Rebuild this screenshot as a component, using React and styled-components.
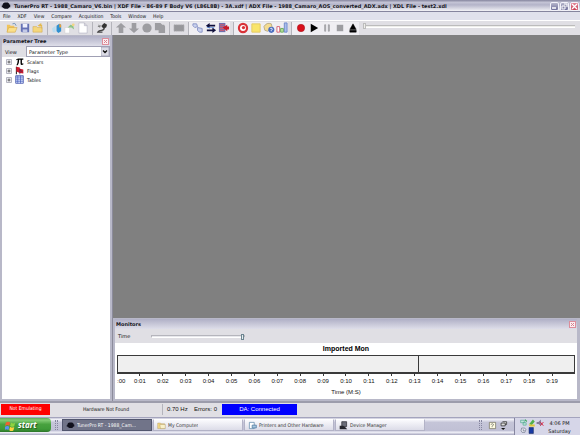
import React, { useState } from "react";
import styled, { createGlobalStyle } from "styled-components";

const title =
  "TunerPro RT - 1988_Camaro_V6.bin | XDF File - 86-89 F Body V6 (L86L8B) - 3A.xdf | ADX File - 1988_Camaro_AOS_converted_ADX.adx | XDL File - test2.xdl";

const menus = ["File", "XDF", "View", "Compare", "Acquisition", "Tools", "Window", "Help"];

const times = Array.from({ length: 19 }, (_, i) => `0:${String(i + 1).padStart(2, "0")}`);

const icons = {
  open: (
    <>
      <path d="M1 3h3l1 1h4v7H1z" fill="#f0c45c" />
      <path d="M3 6h9l-2 5H1z" fill="#fbe08a" stroke="#c99a3c" strokeWidth=".5" />
      <path d="M7 2q3-2 4 2" fill="none" stroke="#6f93b8" />
    </>
  ),
  save: (
    <>
      <path d="M2 2h9v9H3L2 10z" fill="#6672b5" />
      <path d="M4 2h5v4H4z" fill="#eef0fb" />
      <path d="M4 8h5v3H4z" fill="#c3c9e6" />
    </>
  ),
  close: (
    <>
      <path d="M1 5h4l1 1h5v5H1z" fill="#f5d77c" stroke="#c8a04a" strokeWidth=".5" />
      <path d="M6 4l4-3v2h1v4h-1V5H8z" fill="#e3b94e" />
    </>
  ),
  edit: (
    <>
      <path d="M1 7l4-3v7H2z" fill="#b9dcef" />
      <path d="M6 4l3-2 2 1v7l-3 2-2-2z" fill="#2f8fd0" />
      <path d="M9 2l2 1v3H9z" fill="#e9a13a" />
    </>
  ),
  wizard: (
    <>
      <path d="M1 6h5v6H1z" fill="#fff" stroke="#ccc" strokeWidth=".5" />
      <path d="M4 6l3-3 3 1 1 4-3-2z" fill="#8fc487" />
      <circle cx="10" cy="3" r="1.5" fill="#f2d583" />
    </>
  ),
  page: <path d="M2 1h6l3 3v8H2zM8 1v3h3" fill="#fff" stroke="#b5b5c4" strokeWidth=".7" />,
  plug: (
    <>
      <path d="M7 3l2-2 3 2-1 3-3 1-2-2z" fill="#333" />
      <path d="M9 6q0 3-3 3T2 11h5" fill="none" stroke="#444" strokeWidth="1.4" />
      <path d="M2 5l4-1M3 3l1 3" stroke="#777" />
    </>
  ),
  up: <path d="M6.5 1L12 6H9v6H4V6H1z" fill="#9d9da1" />,
  down: <path d="M6.5 12L12 7H9V1H4v6H1z" fill="#9d9da1" />,
  disc: <circle cx="6.5" cy="6.5" r="5" fill="#9d9da1" />,
  copy: <path d="M1 1h6l2 2h2l1 2v7H5V9H1z" fill="#9d9da1" />,
  chip: <path d="M1 3h11v7H1z" fill="#97979b" stroke="#b6b6ba" strokeDasharray="1 1" />,
  link: (
    <>
      <path d="M1 2h4l1 3-3 1-2-2z" fill="#cbd3ef" stroke="#8591c4" />
      <path d="M6 6l5 1v4H8L6 9z" fill="#cbd3ef" stroke="#8591c4" />
    </>
  ),
  swap: (
    <>
      <path d="M1 4l4-3v2h6v2H5v2z" fill="#10103c" />
      <path d="M12 9L8 6v2H2v2h6v2z" fill="#10103c" />
      <path d="M2 6h8" stroke="#5b8fe0" strokeWidth=".8" />
    </>
  ),
  transfer: (
    <>
      <path d="M1 1h7v10H1z" fill="#7070ad" />
      <path d="M2 3h5M2 5h5M2 7h5M2 9h5" stroke="#dc5a6a" />
      <path d="M12 5h-2V3L5 6l5 4V8h2z" fill="#c61b2b" />
    </>
  ),
  gauge: (
    <>
      <circle cx="6.5" cy="6.5" r="4.4" fill="#fff" stroke="#d93238" strokeWidth="2.4" />
      <circle cx="7" cy="6" r="1.8" fill="#d93238" />
    </>
  ),
  note: <path d="M2 2h9v9H2z" fill="#f9e56b" stroke="#e3ca62" />,
  help: (
    <>
      <path d="M1 5q3-5 8-3l1 4-5 4-3-1z" fill="#f4dc92" stroke="#b8a984" />
      <circle cx="9" cy="8.5" r="3.3" fill="#4a6dc0" />
      <path d="M8 7q2-1 2 1L9 9v1" fill="none" stroke="#fff" />
    </>
  ),
  bars: (
    <>
      <path d="M1 5h3v6H1z" fill="#fff" stroke="#d55c6f" />
      <path d="M5 7h3v4H5z" fill="#b9e09b" stroke="#68ab5b" />
      <path d="M9 1h3v10H9z" fill="#a9bdea" stroke="#6d87cb" />
    </>
  ),
  record: <circle cx="6.5" cy="6.5" r="4" fill="#d90f1a" stroke="#9a1018" strokeWidth=".5" />,
  play: <path d="M3 2l8 4.500L3 11z" fill="#000" />,
  pause: <path d="M4 3h1v7H4zM8 3h1v7H8z" fill="#fff" stroke="#9a9a9e" />,
  stop: <path d="M3 3h7v7H3z" fill="#9d9da1" />,
  eject: <path d="M6.5 2L10 8H3zM3 9h7v2H3z" fill="#000" stroke="#000" strokeWidth=".5" />,
  pi: <path d="M1 5q1-3 4-3h7v2h-2v5q0 1 2 0v2q-4 2-4-2V4H6q0 5-2 8H2q2-4 2-8-2 0-3 1z" fill="#000" />,
  flag: (
    <>
      <path d="M2 1v11" stroke="#222" strokeWidth="1.5" />
      <path d="M2 1l5 1v2l5 1v6l-5-1-5-2z" fill="#d11a2d" />
      <path d="M7 4v8M8 6l3 3" stroke="#29295c" />
    </>
  ),
  table: (
    <>
      <path d="M1 1h11v11H1z" fill="#dce6ff" stroke="#2b3d9b" />
      <path d="M1 3h11M1 6h11M1 9h11M4 1v11M8 1v11" stroke="#4159bb" />
    </>
  ),
  logo: <path d="M2 5l1-2 2-1h4l2 2v4l-2 2H5L3 9 2 8H1V6h1zM11 5h1v3h-1z" fill="#10101c" />,
  folder: (
    <>
      <path d="M1 3h4l1 1h5v7H1z" fill="#f4d983" stroke="#a79062" strokeWidth=".6" />
      <path d="M4 5h8v6H5z" fill="#f8f0ca" stroke="#a79062" strokeWidth=".6" />
    </>
  ),
  printer: (
    <>
      <path d="M2 2h7v9H2z" fill="#fff" stroke="#5883a5" />
      <path d="M6 6h6v4H6z" fill="#a7c8df" stroke="#466f9a" />
    </>
  ),
  device: (
    <>
      <path d="M4 1h7v7H4z" fill="#6a6c78" stroke="#26262e" />
      <path d="M1 7h5l3 2 3 3H1z" fill="#26262e" />
    </>
  ),
  windows: (
    <>
      <path d="M1 3q3-2 5 0L5 7Q3 5 0 7z" fill="#ee6131" />
      <path d="M7 3q3 2 5 0l-1 4q-2 2-5 0z" fill="#8fd340" />
      <path d="M0 8q3-2 5 0l-1 4q-2-2-5 0z" fill="#5b91f1" />
      <path d="M6 8q3 2 5 0l-1 4q-2 2-5 0z" fill="#ffd13c" />
    </>
  ),
  keyboard: (
    <>
      <path d="M2 2h9v9H2z" fill="#fffde2" stroke="#6f6d5a" />
      <path d="M4 5q3-2 4 0L6 8v1" fill="none" stroke="#555" />
    </>
  ),
  restore: (
    <>
      <path d="M5 1h6v4H9M3 3h6v4H3z" fill="#ddd" stroke="#222" />
      <path d="M3 10h6l-3 3z" fill="#111" />
    </>
  ),
  network: (
    <>
      <path d="M1 2h6v4H1zM5 6h5v4H5z" fill="#bfe9d9" stroke="#4aa08d" />
      <path d="M8 1l3 3" stroke="#35ab57" strokeWidth="2" />
    </>
  ),
  shield: (
    <>
      <path d="M2 8l6-7 3 3-5 6z" fill="#51b04c" />
      <path d="M1 9h10v3H3z" fill="#e1c737" />
    </>
  ),
  volume: (
    <>
      <path d="M1 5h3l4-4v10L4 8H1z" fill="#847a97" />
      <path d="M7 5l5 6M12 5l-5 6" stroke="#d22645" strokeWidth="1.5" />
    </>
  ),
  clock: <path d="M3 2h6l2 3-2 5H4L2 7zM6 4v3h3" fill="#e9eaf2" stroke="#4f586f" />,
  screen: <path d="M2 1h8v11H2z" fill="#183aa4" stroke="#112354" />,
};

const Icon = ({ name, size = 12 }) => (
  <Drawing width={size} height={size} viewBox="0 0 13 13" aria-hidden="true">
    {icons[name]}
  </Drawing>
);

const toolGroups = [
  { tools: ["open", "save", "close"] },
  { tools: ["edit", "wizard", "page"] },
  { tools: ["plug"] },
  { tools: ["up", "down", "disc", "copy"] },
  { tools: ["chip"] },
  { tools: ["link", "swap", "transfer"], light: true },
  { tools: ["gauge", "note", "help", "bars"], light: true },
  { tools: ["record", "play", "pause", "stop", "eject"], light: true },
];

const tree = [
  { icon: "pi", label: "Scalars" },
  { icon: "flag", label: "Flags" },
  { icon: "table", label: "Tables" },
];

const tasks = [
  { icon: "logo", label: "TunerPro RT - 1988_Cam...", active: true },
  { icon: "folder", label: "My Computer" },
  { icon: "printer", label: "Printers and Other Hardware" },
  { icon: "device", label: "Device Manager" },
];

const CloseButton = ({ label }) => (
  <PanelClose type="button" aria-label={label}>
    <svg width="5" height="5" viewBox="0 0 5 5">
      <path d="M1 1l3 3M4 1L1 4" stroke="#d5838f" />
    </svg>
  </PanelClose>
);

const TitleBar = () => (
  <Title>
    <Icon name="logo" size={10} />
    <TitleText>{title}</TitleText>
    <WindowButton type="button" aria-label="Minimize">
      <svg width="7" height="7" viewBox="0 0 7 7">
        <path d="M1 5h4" stroke="#fff" strokeWidth="1.5" />
      </svg>
    </WindowButton>
    <WindowButton type="button" aria-label="Restore">
      <svg width="7" height="7" viewBox="0 0 7 7">
        <path d="M3 1h3v3M1 3h3v3H1z" fill="none" stroke="#fff" />
      </svg>
    </WindowButton>
    <WindowButton type="button" aria-label="Close" $danger>
      <svg width="7" height="7" viewBox="0 0 7 7">
        <path d="M1 1l5 5M6 1L1 6" stroke="#fff" strokeWidth="1.3" />
      </svg>
    </WindowButton>
  </Title>
);

const ParameterTree = () => {
  const [view, setView] = useState("Parameter Type");
  return (
    <Sidebar>
      <Caption>
        <CaptionText>Parameter Tree</CaptionText>
        <CloseButton label="Close parameter tree" />
      </Caption>
      <ViewRow>
        <ViewLabel htmlFor="view">View</ViewLabel>
        <SelectBox>
          <Select id="view" value={view} onChange={(e) => setView(e.target.value)}>
            <option>Parameter Type</option>
          </Select>
          <Arrow width="8" height="9" viewBox="0 0 8 9">
            <path d="M0 0h8v9H0z" fill="#dcdce6" stroke="#a9a9bb" />
            <path d="M2 3.500l2 2 2-2" fill="none" stroke="#111" strokeWidth="1.3" />
          </Arrow>
        </SelectBox>
      </ViewRow>
      <Tree>
        {tree.map((item) => (
          <TreeItem key={item.label}>
            <Expander type="button" aria-label={`Expand ${item.label}`}>
              <svg width="6" height="6" viewBox="0 0 6 6">
                <path d="M.5 .5h5v5h-5z" fill="#eeeef3" stroke="#b4b4c0" />
                <path d="M1.5 3h3M3 1.500v3" stroke="#444" strokeWidth=".8" />
              </svg>
            </Expander>
            <Icon name={item.icon} size={9} />
            {item.label}
          </TreeItem>
        ))}
      </Tree>
    </Sidebar>
  );
};

const Monitors = () => {
  const [time, setTime] = useState(100);
  return (
    <MonitorPanel>
      <Caption>
        <CaptionText>Monitors</CaptionText>
        <CloseButton label="Close monitors" />
      </Caption>
      <TimeRow>
        <TimeLabel htmlFor="time">Time</TimeLabel>
        <TimeRange id="time" type="range" value={time} onChange={(e) => setTime(e.target.value)} />
      </TimeRow>
      <Chart>
        <ChartTitle>Imported Mon</ChartTitle>
        <Plot>
          <Cursor />
        </Plot>
        <Axis>
          <FirstTick>:00</FirstTick>
          {times.map((t) => (
            <Tick key={t}>{t}</Tick>
          ))}
        </Axis>
        <AxisTitle>Time (M:S)</AxisTitle>
      </Chart>
    </MonitorPanel>
  );
};

export default function App() {
  const [position, setPosition] = useState(0);
  return (
    <Screen>
      <GlobalStyle />
      <TitleBar />
      <MenuBar>
        {menus.map((m) => (
          <MenuButton type="button" key={m}>
            {m}
          </MenuButton>
        ))}
      </MenuBar>
      <Toolbar>
        {toolGroups.map((group) => (
          <ToolGroup key={group.tools[0]} $light={group.light}>
            {group.tools.map((name) => (
              <ToolButton type="button" key={name} aria-label={name}>
                <Icon name={name} />
              </ToolButton>
            ))}
          </ToolGroup>
        ))}
        <SeekRange
          type="range"
          aria-label="Playback position"
          value={position}
          onChange={(e) => setPosition(e.target.value)}
        />
      </Toolbar>
      <Main>
        <ParameterTree />
        <Workspace>
          <Canvas />
          <Monitors />
        </Workspace>
      </Main>
      <StatusBar>
        <Emulation>Not Emulating</Emulation>
        <Hardware>Hardware Not Found</Hardware>
        <Rate>0.70 Hz</Rate>
        <Errors>Errors: 0</Errors>
        <Connection>DA: Connected</Connection>
      </StatusBar>
      <Taskbar>
        <StartButton type="button">
          <Icon name="windows" size={11} />
          start
        </StartButton>
        <Grip />
        {tasks.map((task) => (
          <TaskButton type="button" key={task.label} $active={task.active}>
            <Icon name={task.icon} size={9} />
            <TaskText>{task.label}</TaskText>
          </TaskButton>
        ))}
        <LanguageBar>
          <Grip />
          <Icon name="keyboard" size={9} />
          <Icon name="restore" size={9} />
        </LanguageBar>
        <Tray>
          <TrayIcons>
            <Icon name="network" size={8} />
            <Icon name="shield" size={8} />
            <Icon name="volume" size={8} />
            <Icon name="clock" size={7} />
            <Icon name="screen" size={7} />
          </TrayIcons>
          <Clock>
            <span>4:06 PM</span>
            <span>Saturday</span>
          </Clock>
        </Tray>
      </Taskbar>
    </Screen>
  );
}

const GlobalStyle = createGlobalStyle`
  * {
    box-sizing: border-box;
  }
  body {
    margin: 0;
    font-family: "DejaVu Sans Condensed", "DejaVu Sans", sans-serif;
    font-size: 5px;
    line-height: 8px;
    color: #111;
  }
  button, select, input {
    margin: 0;
    padding: 0;
    border: 0;
    border-radius: 0;
    background: none;
    font: inherit;
    color: inherit;
  }
`;

const Drawing = styled.svg`
  display: block;
  flex-shrink: 0;
`;

const Screen = styled.div`
  min-height: 100vh;
  display: flex;
  flex-direction: column;
  background-color: #e0dfe4;
`;

const Title = styled.header`
  height: 12px;
  display: flex;
  align-items: center;
  gap: 1px;
  padding: 0 1px;
  background: linear-gradient(#85859e, #c3c3d5 20%, #b4b4c9 40%, #dddde7 75%, #f3f3f7 92%, #85859e 93%);
`;

const TitleText = styled.h1`
  flex: 1;
  min-width: 0;
  margin: 0;
  padding-left: 2px;
  overflow: hidden;
  white-space: nowrap;
  font-family: "DejaVu Sans", sans-serif;
  font-size: 5px;
  line-height: 10px;
  font-weight: bold;
  color: #151520;
`;

const WindowButton = styled.button`
  width: 9px;
  height: 9px;
  display: flex;
  align-items: center;
  justify-content: center;
  border: 1px solid #f2f2fa;
  border-radius: 2px;
  background: ${({ $danger }) =>
    $danger ? "linear-gradient(#e3879a, #c94055)" : "linear-gradient(#b5b5cb, #70709b)"};
`;

const MenuBar = styled.nav`
  height: 8px;
  display: flex;
  gap: 7px;
  padding-left: 3px;
  background-color: #e0e1ec;
`;

const MenuButton = styled.button`
  line-height: 8px;
`;

const Toolbar = styled.div`
  height: 15px;
  display: flex;
  align-items: center;
  padding: 0 5px;
  border-top: 1px solid #fff;
  background-color: #e0dfe4;
`;

const ToolGroup = styled.div`
  display: flex;
  background-color: ${({ $light }) => ($light ? "#efeef2" : "transparent")};

  &:not(:first-child) {
    margin-left: 3px;
    padding-left: 2px;
    border-left: 1px solid #b4b4bb;
  }
`;

const ToolButton = styled.button`
  width: 13px;
  height: 13px;
  display: flex;
  align-items: center;
  justify-content: center;
`;

const SeekRange = styled.input`
  flex: 1;
  height: 10px;
  min-width: 0;
  align-self: flex-start;
  margin-left: 4px;
  appearance: none;

  &::-webkit-slider-runnable-track {
    height: 3px;
    border-top: 1px solid #bcbcbc;
    border-bottom: 1px solid #fff;
    background-color: #eeeeea;
  }
  &::-webkit-slider-thumb {
    appearance: none;
    width: 3px;
    height: 6px;
    margin-top: -3px;
    border: 1px solid #bcbcbc;
    background-color: #eeeeea;
  }
`;

const Main = styled.main`
  flex: 1;
  display: flex;
  background-color: #b8b8c8;
`;

const Sidebar = styled.aside`
  width: 113px;
  display: flex;
  flex-direction: column;
  padding: 1px 2px 2px;
  border-right: 1px solid #8b8b9b;
`;

const Caption = styled.div`
  height: 10px;
  display: flex;
  align-items: center;
  justify-content: space-between;
  padding: 0 1px;
  background: linear-gradient(#b0b0c6, #dedee9);
`;

const CaptionText = styled.h2`
  margin: 0;
  font-family: "DejaVu Sans", sans-serif;
  font-size: 5px;
  line-height: 10px;
  font-weight: bold;
  color: #15151c;
`;

const PanelClose = styled.button`
  width: 7px;
  height: 7px;
  display: flex;
  align-items: center;
  justify-content: center;
  border: 1px solid #dd8e9b;
  background-color: #fbeef1;
`;

const ViewRow = styled.div`
  display: flex;
  align-items: center;
  background-color: #e0dfe4;
`;

const ViewLabel = styled.label`
  width: 24px;
  padding-left: 3px;
  font-family: "DejaVu Sans", sans-serif;
`;

const SelectBox = styled.div`
  flex: 1;
  position: relative;
`;

const Select = styled.select`
  display: block;
  width: 100%;
  height: 11px;
  padding-left: 2px;
  appearance: none;
  border: 1px solid #a0a0b4;
  background-color: #fff;
  font-family: "DejaVu Sans", sans-serif;
`;

const Arrow = styled.svg`
  position: absolute;
  top: 1px;
  right: 1px;
  pointer-events: none;
`;

const Tree = styled.ul`
  flex: 1;
  margin: 0;
  padding: 0 4px;
  list-style: none;
  background-color: #fff;
`;

const TreeItem = styled.li`
  height: 9px;
  display: flex;
  align-items: center;
  gap: 3px;
`;

const Expander = styled.button`
  display: flex;
`;

const Workspace = styled.section`
  flex: 1;
  min-width: 0;
  display: flex;
  flex-direction: column;
`;

const Canvas = styled.div`
  flex: 1;
  background-color: #808080;
`;

const MonitorPanel = styled.section`
  padding: 1px 3px 2px 2px;
`;

const TimeRow = styled.div`
  height: 14px;
  display: flex;
  align-items: center;
  background-color: #e0dfe4;
`;

const TimeLabel = styled.label`
  width: 36px;
  padding-left: 3px;
  font-family: "DejaVu Sans", sans-serif;
`;

const TimeRange = styled.input`
  width: 94px;
  height: 9px;
  appearance: none;

  &::-webkit-slider-runnable-track {
    height: 3px;
    border: 1px solid #b5b5bc;
    border-bottom-color: #fff;
    background-color: #e8e8ec;
  }
  &::-webkit-slider-thumb {
    appearance: none;
    width: 3px;
    height: 6px;
    margin-top: -2px;
    border: 1px solid #6d8590;
    background-color: #e8eef0;
  }
`;

const Chart = styled.div`
  padding: 0 2px 3px;
  background-color: #fff;
  font-family: "Liberation Sans", sans-serif;
  font-size: 6px;
  text-align: center;
`;

const ChartTitle = styled.h3`
  margin: 0;
  font-size: 7px;
  line-height: 12px;
  color: #000;
`;

const Plot = styled.div`
  height: 19px;
  border: 1px solid #3a3a3a;
  border-bottom-width: 2px;
  background-color: #efefef;
`;

const Cursor = styled.div`
  width: 66%;
  height: 100%;
  border-right: 1px solid #3a3a3a;
`;

const Axis = styled.div`
  display: grid;
  grid-template-columns: minmax(0, 1fr) repeat(19, minmax(0, 2fr)) minmax(0, 1fr);
`;

const Tick = styled.span`
  &::before {
    content: "";
    display: block;
    width: 1px;
    height: 2px;
    margin: 0 auto 1px;
    background-color: #3a3a3a;
  }
`;

const FirstTick = styled.span`
  padding-top: 3px;
  text-align: left;
`;

const AxisTitle = styled.div`
  padding-top: 3px;
`;

const StatusBar = styled.footer`
  height: 16px;
  display: flex;
  align-items: center;
  padding: 0 1px 2px;
  border-top: 2px solid #9c9cab;
  background-color: #e0dfe4;
  line-height: 11px;
`;

const Badge = styled.div`
  height: 11px;
  color: #fff;
  text-align: center;
`;

const Emulation = styled(Badge)`
  width: 49px;
  line-height: 8px;
  background-color: #ff0000;
`;

const Connection = styled(Badge)`
  width: 75px;
  background-color: #0000ff;
  font-family: "Liberation Sans", sans-serif;
  font-size: 6px;
`;

const Hardware = styled.div`
  width: 113px;
  border-right: 1px solid #b4b4bc;
  text-align: center;
`;

const Rate = styled.div`
  width: 31px;
  padding-left: 4px;
  font-family: "Liberation Sans", sans-serif;
  font-size: 6px;
`;

const Errors = styled(Rate)`
  width: 28px;
  padding-left: 0;
`;

const Taskbar = styled.div`
  height: 18px;
  display: flex;
  align-items: flex-start;
  padding-top: 1px;
  background: linear-gradient(#8c8cab, #f4f4fa 12%, #c5c5d8 30%, #c0c0d5 75%, #f0f0f8 85%, #a5a5bd);
`;

const StartButton = styled.button`
  width: 51px;
  height: 14px;
  display: flex;
  align-items: center;
  gap: 2px;
  padding-left: 5px;
  border-radius: 0 4px 4px 0;
  background: linear-gradient(#5fa65a, #83cc75 15%, #48a23f 45%, #3e9a38 80%, #2b7428);
  color: #fff;
  font-family: "Open Sans", sans-serif;
  font-size: 8px;
  font-style: italic;
  font-weight: bold;
  text-shadow: 1px 1px 1px #24551f;
`;

const Grip = styled.span`
  width: 3px;
  height: 10px;
  margin: 2px 4px;
  border: 1px dotted #85859f;
  border-width: 0 1px;
`;

const TaskButton = styled.button`
  width: 90px;
  height: 12px;
  min-width: 0;
  display: flex;
  align-items: center;
  gap: 2px;
  margin: 1px 1px 0 0;
  padding: 0 3px;
  border: 1px solid ${({ $active }) => ($active ? "#52566e" : "#b3b3c7")};
  border-top-color: ${({ $active }) => ($active ? "#52566e" : "#fff")};
  background: ${({ $active }) => ($active ? "#717489" : "linear-gradient(#fafafd, #dcdce8)")};
  color: ${({ $active }) => ($active ? "#fff" : "#333")};
`;

const TaskText = styled.span`
  overflow: hidden;
  white-space: nowrap;
`;

const LanguageBar = styled.div`
  display: flex;
  align-items: center;
  gap: 2px;
  margin-left: auto;
  padding-right: 6px;
`;

const Tray = styled.div`
  width: 66px;
  height: 17px;
  display: flex;
  align-items: center;
  gap: 2px;
  padding: 0 7px 0 5px;
  border-left: 1px solid #85859f;
  background-color: #d6d6e8;
`;

const TrayIcons = styled.div`
  display: grid;
  grid-template-columns: repeat(3, 8px);
`;

const Clock = styled.div`
  flex: 1;
  display: flex;
  flex-direction: column;
  align-items: center;
  font-family: "DejaVu Sans", sans-serif;
`;
